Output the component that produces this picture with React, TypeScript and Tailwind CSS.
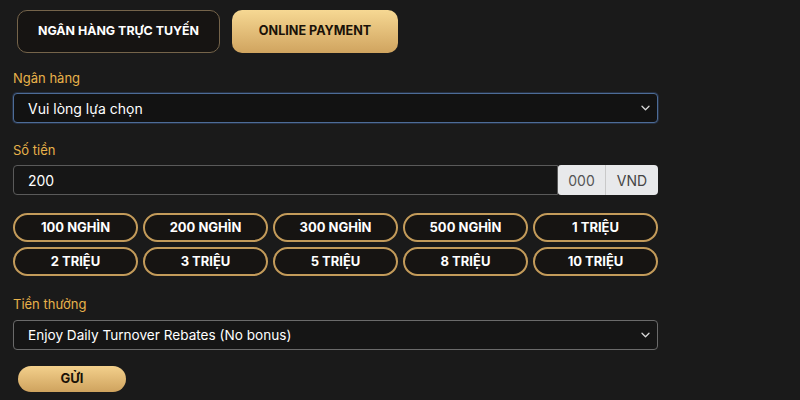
import React from "react";

const amounts = [
  "100 NGHÌN",
  "200 NGHÌN",
  "300 NGHÌN",
  "500 NGHÌN",
  "1 TRIỆU",
  "2 TRIỆU",
  "3 TRIỆU",
  "5 TRIỆU",
  "8 TRIỆU",
  "10 TRIỆU",
];

function Chevron() {
  return (
    <svg width="9" height="6" viewBox="0 0 9 6" fill="none" className="shrink-0">
      <path d="M1 1.2l3.5 3.5 3.5-3.5" stroke="#d8d8d8" strokeWidth="1.3" strokeLinecap="round" strokeLinejoin="round" />
    </svg>
  );
}

export default function App() {
  return (
    <div
      className="w-[800px] h-[400px] bg-[#1a1a1a] overflow-hidden flex flex-col pl-[13px] pt-[10px]"
      style={{ fontFamily: "Inter, 'Noto Sans', sans-serif" }}
    >
      <div className="flex gap-[12px] pl-[4px]">
        <div className="w-[203px] h-[43px] rounded-[10px] border border-[#75644a] bg-[#161412] flex items-center justify-center text-white text-[12.4px] font-bold">
          NGÂN HÀNG TRỰC TUYẾN
        </div>
        <div className="w-[166px] h-[43px] rounded-[10px] bg-gradient-to-b from-[#f6d893] to-[#d0a45f] flex items-center justify-center text-[#1a1208] text-[12.6px] font-bold">
          ONLINE PAYMENT
        </div>
      </div>

      <div className="mt-[16px] text-[13px] text-[#e8b24a] leading-[18px]">Ngân hàng</div>
      <div className="mt-[6px] w-[645px] h-[30px] rounded-[4px] border border-[#4d6c97] bg-[#121212] flex items-center justify-between pl-[14px] pr-[7px] shadow-[0_0_0_1px_rgba(60,90,140,0.35)]">
        <span className="text-white text-[14px]">Vui lòng lựa chọn</span>
        <Chevron />
      </div>

      <div className="mt-[18px] text-[13px] text-[#e8b24a] leading-[18px]">Số tiền</div>
      <div className="mt-[6px] w-[645px] h-[30px] flex">
        <div className="flex-1 rounded-l-[4px] border border-[#5a5a5a] bg-[#161616] flex items-center pl-[14px] text-white text-[14px]">
          200
        </div>
        <div className="w-[48px] rounded-l-[3px] bg-[#e8e9eb] border-r border-[#c9c9c9] flex items-center justify-center text-[#555] text-[14px]">
          000
        </div>
        <div className="w-[52px] rounded-r-[4px] bg-[#e8e9eb] flex items-center justify-center text-[#444] text-[14px]">
          VND
        </div>
      </div>

      <div className="mt-[18px] w-[645px] grid grid-cols-5 gap-x-[5px] gap-y-[5px]">
        {amounts.map((a) => (
          <div
            key={a}
            className="h-[29px] rounded-full border-2 border-[#c39b5a] bg-[#161412] flex items-center justify-center text-white text-[13px] font-bold"
          >
            {a}
          </div>
        ))}
      </div>

      <div className="mt-[19px] text-[13px] text-[#e8b24a] leading-[18px]">Tiền thưởng</div>
      <div className="mt-[7px] w-[645px] h-[30px] rounded-[4px] border border-[#6a6a6a] bg-[#151515] flex items-center justify-between pl-[14px] pr-[7px]">
        <span className="text-white text-[13.6px]">Enjoy Daily Turnover Rebates (No bonus)</span>
        <Chevron />
      </div>

      <div className="mt-[16px] ml-[5px] w-[108px] h-[26px] rounded-full bg-gradient-to-b from-[#f3d08c] to-[#cfa35e] flex items-center justify-center text-[#1a1208] text-[13px] font-bold">
        GỬI
      </div>
    </div>
  );
}
